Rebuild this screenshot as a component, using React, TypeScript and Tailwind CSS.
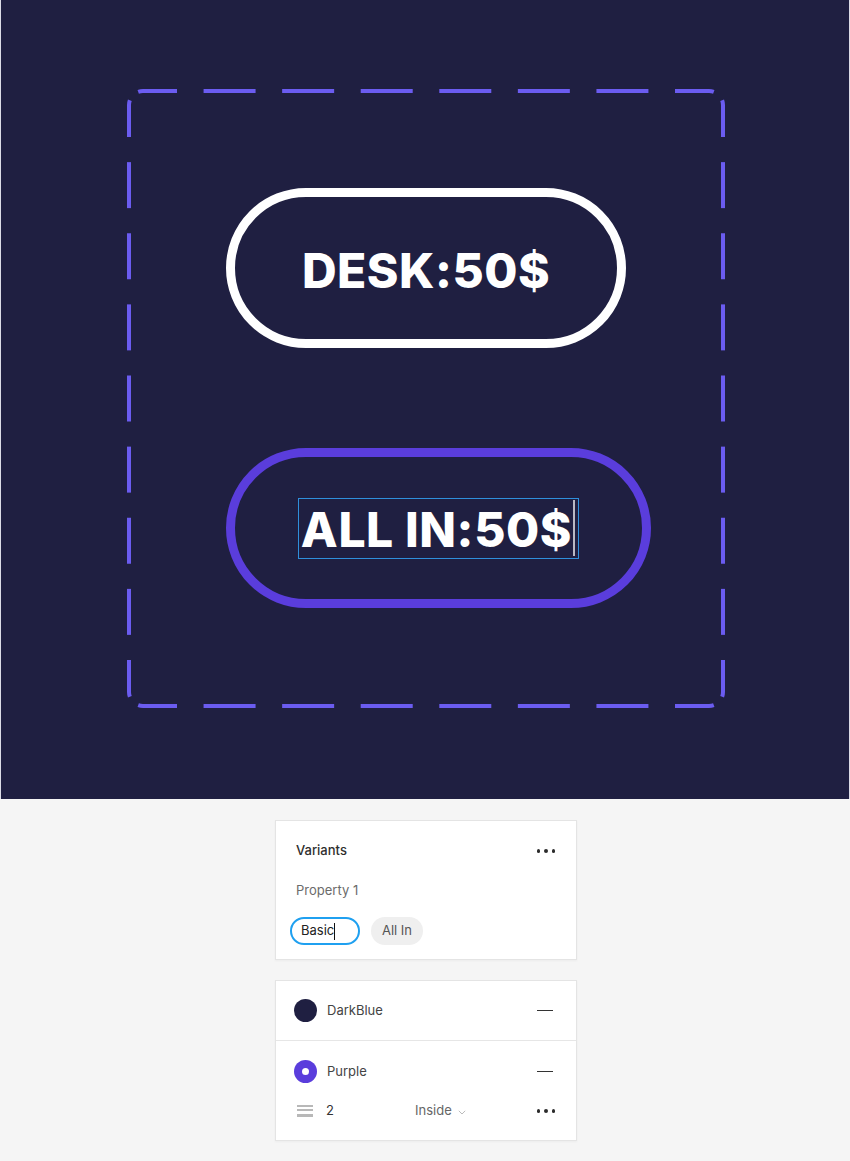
import React from "react";

const DASH = "#6b5cf0";

function arcPt(cx: number, cy: number, r: number, deg: number) {
  const a = (deg * Math.PI) / 180;
  return [cx + r * Math.cos(a), cy + r * Math.sin(a)];
}

function DashedFrame() {
  const W = 594;
  const H = 615;
  const r = 14;
  const cov = 20;
  const paths: string[] = [];
  const hEnd = 34;
  const vEnd = 32;
  const hd = 52;
  const hInner = W - 2 * r - 2 * hEnd;
  const hg = (hInner - 6 * hd) / 7;
  const vd = 46;
  const vInner = H - 2 * r - 2 * vEnd;
  const vg = (vInner - 7 * vd) / 8;
  for (const y of [0, H]) {
    for (let i = 0; i < 6; i++) {
      const x0 = r + hEnd + hg + i * (hd + hg);
      paths.push(`M${x0} ${y}L${x0 + hd} ${y}`);
    }
  }
  for (const x of [0, W]) {
    for (let i = 0; i < 7; i++) {
      const y0 = r + vEnd + vg + i * (vd + vg);
      paths.push(`M${x} ${y0}L${x} ${y0 + vd}`);
    }
  }
  const corners = [
    { cx: r, cy: r, hx: r + hEnd, hy: 0, hAng: 270, hDir: -1, vx: 0, vy: r + vEnd, vAng: 180, vDir: 1 },
    { cx: W - r, cy: r, hx: W - r - hEnd, hy: 0, hAng: 270, hDir: 1, vx: W, vy: r + vEnd, vAng: 360, vDir: -1 },
    { cx: r, cy: H - r, hx: r + hEnd, hy: H, hAng: 90, hDir: 1, vx: 0, vy: H - r - vEnd, vAng: 180, vDir: -1 },
    { cx: W - r, cy: H - r, hx: W - r - hEnd, hy: H, hAng: 90, hDir: -1, vx: W, vy: H - r - vEnd, vAng: 0, vDir: 1 },
  ];
  for (const c of corners) {
    const hs = arcPt(c.cx, c.cy, r, c.hAng);
    const he = arcPt(c.cx, c.cy, r, c.hAng + c.hDir * cov);
    const sweepH = c.hDir > 0 ? 1 : 0;
    paths.push(`M${c.hx} ${c.hy}L${hs[0]} ${hs[1]}A${r} ${r} 0 0 ${sweepH} ${he[0]} ${he[1]}`);
    const vs = arcPt(c.cx, c.cy, r, c.vAng);
    const ve = arcPt(c.cx, c.cy, r, c.vAng + c.vDir * cov);
    const sweepV = c.vDir > 0 ? 1 : 0;
    paths.push(`M${c.vx} ${c.vy}L${vs[0]} ${vs[1]}A${r} ${r} 0 0 ${sweepV} ${ve[0]} ${ve[1]}`);
  }
  return (
    <svg
      className="absolute left-0 top-0 overflow-visible pointer-events-none"
      width={W}
      height={H}
      viewBox={`0 0 ${W} ${H}`}
    >
      {paths.map((d, i) => (
        <path key={i} d={d} fill="none" stroke={DASH} strokeWidth={4} strokeLinecap="butt" />
      ))}
    </svg>
  );
}

function Dots() {
  return (
    <div className="flex items-center gap-[4px]">
      <span className="w-[3.5px] h-[3.5px] rounded-full bg-[#2b2b2b]" />
      <span className="w-[3.5px] h-[3.5px] rounded-full bg-[#2b2b2b]" />
      <span className="w-[3.5px] h-[3.5px] rounded-full bg-[#2b2b2b]" />
    </div>
  );
}

function Minus() {
  return <span className="block w-[16px] h-[1.5px] bg-[#333333]" />;
}

export default function App() {
  const pillFont = { fontFamily: "Inter, 'Open Sans', sans-serif" };
  return (
    <div className="w-[850px] min-h-[1161px] bg-[#f5f5f5]" style={{ fontFamily: "Inter, 'Noto Sans', sans-serif" }}>
      {/* Canvas */}
      <div className="h-[799px] bg-[#1f1f41] border-l border-r border-[#dcdce6] pt-[91px] pl-[128px]">
        <div className="relative w-[594px] h-[615px] pt-[97px] pl-[97px] flex flex-col gap-[100px]">
          <DashedFrame />
          <div
            className="w-[400px] h-[160px] rounded-full border-[9px] border-white flex items-center justify-center pt-[6px]"
            style={pillFont}
          >
            <span className="text-white text-[48px] font-extrabold tracking-[0.5px] leading-none">DESK:50$</span>
          </div>
          <div
            className="w-[425px] h-[160px] rounded-full border-[9px] border-[#5a3ddc] flex items-center justify-center"
            style={pillFont}
          >
            <span className="flex items-center h-[61px] border border-[#2f8fdb] pl-[2px] pr-[3px]">
              <span className="text-white text-[48px] font-extrabold tracking-[0.6px] leading-none pt-[4px]">ALL IN:50$</span>
              <span className="w-[2px] h-[56px] bg-[#b9b9c4] ml-[1px]" />
            </span>
          </div>
        </div>
      </div>

      {/* Panels */}
      <div className="pt-[21px] pb-[20px] pl-[275px] flex flex-col gap-[20px]">
        <div className="w-[302px] h-[140px] bg-white border border-[#e4e4e4] shadow-[0_1px_2px_rgba(0,0,0,0.04)] flex flex-col">
          <div className="h-[59px] flex items-center justify-between pl-[20px] pr-[21px] pt-[1px]">
            <span className="text-[13px] font-medium text-[#2e2e2e]">Variants</span>
            <Dots />
          </div>
          <div className="h-[20px] flex items-center pl-[20px] pt-[1px]">
            <span className="text-[13px] text-[#6b6b6b]">Property 1</span>
          </div>
          <div className="flex items-center gap-[11px] pl-[14px] pt-[17px]">
            <div className="h-[28px] w-[70px] rounded-full border-2 border-[#1fa0f0] flex items-center pl-[9px]">
              <span className="text-[13px] text-[#222222]">Basic</span>
              <span className="w-[1px] h-[17px] bg-[#111111]" />
            </div>
            <div className="h-[28px] w-[52px] rounded-full bg-[#efefef] flex items-center justify-center">
              <span className="text-[13px] text-[#555555]">All In</span>
            </div>
          </div>
        </div>

        <div className="w-[302px] h-[161px] bg-white border border-[#e4e4e4] shadow-[0_1px_2px_rgba(0,0,0,0.04)] flex flex-col">
          <div className="h-[59px] flex items-center justify-between pl-[18px] pr-[23px]">
            <div className="flex items-center gap-[10px]">
              <span className="w-[23px] h-[23px] rounded-full bg-[#1f1f41]" />
              <span className="text-[13px] text-[#444444]">DarkBlue</span>
            </div>
            <Minus />
          </div>
          <div className="h-px bg-[#e6e6e6]" />
          <div className="h-[61px] flex items-center justify-between pl-[18px] pr-[23px]">
            <div className="flex items-center gap-[10px]">
              <span className="w-[23px] h-[23px] rounded-full bg-[#5a3ddc] flex items-center justify-center">
                <span className="w-[7px] h-[7px] rounded-full bg-white" />
              </span>
              <span className="text-[13px] text-[#444444]">Purple</span>
            </div>
            <Minus />
          </div>
          <div className="h-[20px] flex items-center pl-[21px] pr-[21px] -mt-[1px]">
            <div className="w-[16px] flex flex-col gap-[2.5px]">
              <span className="h-[2px] bg-[#b8b8b8]" />
              <span className="h-[2px] bg-[#b8b8b8]" />
              <span className="h-[3.5px] bg-[#b8b8b8]" />
            </div>
            <span className="text-[13px] text-[#333333] ml-[13px] w-[89px]">2</span>
            <div className="flex items-center gap-[6px]">
              <span className="text-[13px] text-[#666666]">Inside</span>
              <svg width="8" height="5" viewBox="0 0 8 5" className="mt-[2px]">
                <path d="M0.8 0.8 L4 4 L7.2 0.8" fill="none" stroke="#bbbbbb" strokeWidth="1" />
              </svg>
            </div>
            <div className="ml-auto">
              <Dots />
            </div>
          </div>
        </div>
      </div>
    </div>
  );
}
